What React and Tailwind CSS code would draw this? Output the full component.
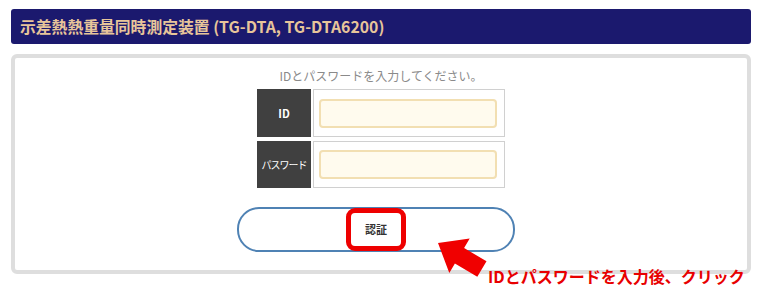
const jp = { fontFamily: '"Noto Sans CJK JP", "Noto Sans", sans-serif' };

function LoginRow({ label, small }) {
  return (
    <div className="flex gap-[2px]">
      <div
        className={`flex w-[54px] items-center justify-center bg-[#404040] text-white ${
          small ? "text-[10px] tracking-[-1px]" : "text-[11px] font-bold"
        }`}
      >
        {label}
      </div>
      <div className="flex w-[192px] items-center border border-[#d0d0d0] bg-white pl-[5px] pr-[7px]">
        <input
          type="text"
          className="h-[29px] w-full rounded-[4px] border-2 border-[#f2dfb2] bg-[#fffbee] outline-none"
        />
      </div>
    </div>
  );
}

function Arrow() {
  return (
    <svg
      className="absolute left-[430px] top-[230px]"
      width="70"
      height="55"
      viewBox="430 230 70 55"
    >
      <polygon
        points="438,243 469.7,238.5 464.1,248 486.5,261.3 477.3,276.7 454.9,263.4 449.3,272.9"
        fill="#f00000"
      />
    </svg>
  );
}

export default function App() {
  return (
    <div className="relative h-[301px] w-[763px] bg-white" style={jp}>
      <div className="px-[11px] pt-[9px] pr-[12px]">
        <div className="flex h-[35px] items-center rounded-[3px] bg-[#1b196e] pl-[9px] text-[15.8px] font-bold text-[#e8c59a]">
          示差熱熱重量同時測定装置 (TG-DTA, TG-DTA6200)
        </div>

        <div className="mt-[10px] h-[220px] rounded-[6px] border-4 border-[#dedede] bg-white">
          <p className="pt-[10px] text-center text-[12px] leading-[16px] text-[#8a8a8a]">
            IDとパスワードを入力してください。
          </p>

          <div className="mt-[5px] flex flex-col items-center gap-[4px]">
            <div className="h-[48px] flex">
              <LoginRow label="ID" />
            </div>
            <div className="h-[47px] flex">
              <LoginRow label="パスワード" small />
            </div>
          </div>

          <div className="mt-[19px] flex justify-center pr-[10px]">
            <div className="relative flex h-[45px] w-[278px] items-center justify-center rounded-[22px] border-2 border-[#4f82b4]">
              <div className="flex h-[43px] w-[60px] items-center justify-center rounded-[9px] border-[5px] border-[#ee0000] bg-white text-[11px] font-bold text-[#333]">
                認証
              </div>
            </div>
          </div>
        </div>
      </div>

      <Arrow />
      <div className="absolute left-[488px] top-[266px] text-[16px] font-bold leading-[20px] text-[#e80000]">
        IDとパスワードを入力後、クリック
      </div>
    </div>
  );
}
